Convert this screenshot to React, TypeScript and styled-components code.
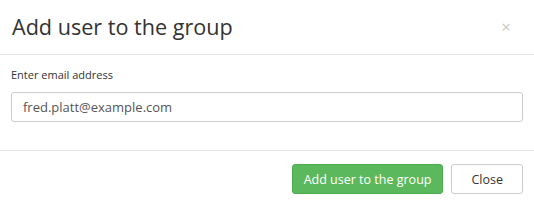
import styled, { createGlobalStyle } from 'styled-components';

const GlobalStyle = createGlobalStyle`
  html, body {
    margin: 0;
    padding: 0;
    background: #fff;
  }
  body {
    font-family: "Open Sans", "Liberation Sans", sans-serif;
    color: #333;
  }
`;

const Modal = styled.div`
  width: 534px;
  height: 216px;
  background: #fff;
  display: flex;
  flex-direction: column;
`;

const Header = styled.div`
  display: flex;
  align-items: center;
  justify-content: space-between;
  height: 55px;
  padding: 0 11px 0 12px;
  border-bottom: 1px solid #e5e5e5;
  box-sizing: border-box;
`;

const Title = styled.h4`
  margin: 0;
  font-size: 21.6px;
  font-weight: 400;
  color: #333;
  line-height: 1;
  padding-bottom: 1px;
`;

const CloseX = styled.button`
  border: 0;
  background: none;
  color: #c8c8c8;
  font-size: 17px;
  line-height: 1;
  padding: 0 0 2px;
  margin-right: 12px;
  font-family: "Open Sans", sans-serif;
  cursor: pointer;
`;

const Body = styled.div`
  padding: 12px 11px 0;
  height: 96px;
  box-sizing: border-box;
  border-bottom: 1px solid #e5e5e5;
`;

const Label = styled.label`
  display: block;
  font-size: 11px;
  color: #333;
  margin-bottom: 10px;
`;

const Input = styled.input`
  display: block;
  width: 100%;
  height: 30px;
  box-sizing: border-box;
  padding: 0 11px;
  border: 1px solid #ccc;
  border-radius: 3px;
  font-family: "Open Sans", sans-serif;
  font-size: 13px;
  color: #555;
  outline: none;
`;

const Footer = styled.div`
  display: flex;
  justify-content: flex-end;
  gap: 8px;
  padding: 13px 11px 0;
`;

const Button = styled.button<{ $primary?: boolean }>`
  height: 30px;
  box-sizing: border-box;
  padding: 0 ${(p) => (p.$primary ? '11px' : '19px')};
  border-radius: 3px;
  font-family: "Open Sans", sans-serif;
  font-size: 12.5px;
  cursor: pointer;
  border: 1px solid ${(p) => (p.$primary ? '#4cae4c' : '#ccc')};
  background: ${(p) => (p.$primary ? '#5cb85c' : '#fff')};
  color: ${(p) => (p.$primary ? '#fff' : '#333')};
`;

export default function App() {
  return (
    <>
      <GlobalStyle />
      <Modal>
        <Header>
          <Title>Add user to the group</Title>
          <CloseX>×</CloseX>
        </Header>
        <Body>
          <Label>Enter email address</Label>
          <Input defaultValue="fred.platt@example.com" />
        </Body>
        <Footer>
          <Button $primary>Add user to the group</Button>
          <Button>Close</Button>
        </Footer>
      </Modal>
    </>
  );
}
